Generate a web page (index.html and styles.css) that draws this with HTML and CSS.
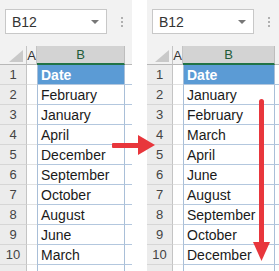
FILE: index.html
```html
<!DOCTYPE html>
<html>
<head>
<meta charset="utf-8">
<link rel="stylesheet" href="styles.css">
</head>
<body>
<div class="panel left">
  <div class="toolbar">
    <div class="namebox"><span>B12</span><i class="caret"></i></div>
    <div class="dots"><b></b><b></b><b></b></div>
  </div>
  <div class="sheet">
    <div class="row head"><div class="rh corner"><svg width="14" height="12" viewBox="0 0 14 12"><polygon points="14,0 14,12 0,12" fill="#c9c9c9"/></svg></div><div class="ca">A</div><div class="cb">B</div><div class="cc"></div></div>
    <div class="row"><div class="rh">1</div><div class="ca"></div><div class="cb hdr">Date</div><div class="cc"></div></div>
    <div class="row"><div class="rh">2</div><div class="ca"></div><div class="cb">February</div><div class="cc"></div></div>
    <div class="row"><div class="rh">3</div><div class="ca"></div><div class="cb">January</div><div class="cc"></div></div>
    <div class="row"><div class="rh">4</div><div class="ca"></div><div class="cb">April</div><div class="cc"></div></div>
    <div class="row"><div class="rh">5</div><div class="ca"></div><div class="cb">December</div><div class="cc"></div></div>
    <div class="row"><div class="rh">6</div><div class="ca"></div><div class="cb">September</div><div class="cc"></div></div>
    <div class="row"><div class="rh">7</div><div class="ca"></div><div class="cb">October</div><div class="cc"></div></div>
    <div class="row"><div class="rh">8</div><div class="ca"></div><div class="cb">August</div><div class="cc"></div></div>
    <div class="row"><div class="rh">9</div><div class="ca"></div><div class="cb">June</div><div class="cc"></div></div>
    <div class="row"><div class="rh">10</div><div class="ca"></div><div class="cb">March</div><div class="cc"></div></div>
    <div class="row"><div class="rh"></div><div class="ca"></div><div class="cb"></div><div class="cc"></div></div>
  </div>
</div>
<div class="panel right">
  <div class="toolbar">
    <div class="namebox"><span>B12</span><i class="caret"></i></div>
    <div class="dots"><b></b><b></b><b></b></div>
  </div>
  <div class="sheet">
    <div class="row head"><div class="rh corner"><svg width="14" height="12" viewBox="0 0 14 12"><polygon points="14,0 14,12 0,12" fill="#c9c9c9"/></svg></div><div class="ca">A</div><div class="cb">B</div><div class="cc"></div></div>
    <div class="row"><div class="rh">1</div><div class="ca"></div><div class="cb hdr">Date</div><div class="cc"></div></div>
    <div class="row"><div class="rh">2</div><div class="ca"></div><div class="cb">January</div><div class="cc"></div></div>
    <div class="row"><div class="rh">3</div><div class="ca"></div><div class="cb">February</div><div class="cc"></div></div>
    <div class="row"><div class="rh">4</div><div class="ca"></div><div class="cb">March</div><div class="cc"></div></div>
    <div class="row"><div class="rh">5</div><div class="ca"></div><div class="cb">April</div><div class="cc"></div></div>
    <div class="row"><div class="rh">6</div><div class="ca"></div><div class="cb">June</div><div class="cc"></div></div>
    <div class="row"><div class="rh">7</div><div class="ca"></div><div class="cb">August</div><div class="cc"></div></div>
    <div class="row"><div class="rh">8</div><div class="ca"></div><div class="cb">September</div><div class="cc"></div></div>
    <div class="row"><div class="rh">9</div><div class="ca"></div><div class="cb">October</div><div class="cc"></div></div>
    <div class="row"><div class="rh">10</div><div class="ca"></div><div class="cb">December</div><div class="cc"></div></div>
    <div class="row"><div class="rh"></div><div class="ca"></div><div class="cb"></div><div class="cc"></div></div>
  </div>
</div>
<svg class="arrows" width="279" height="271" viewBox="0 0 279 271">
  <g fill="#e8363c">
    <rect x="112" y="143" width="29" height="5" rx="1"/>
    <polygon points="138,135 138,155 155,145"/>
    <rect x="259" y="99" width="5" height="146" rx="2.5"/>
    <polygon points="253,242 270,242 261.5,261"/>
  </g>
</svg>
</body>
</html>
```
FILE: styles.css
```css
html, body {
  margin: 0;
  padding: 0;
}
body {
  width: 279px;
  height: 271px;
  overflow: hidden;
  background: #ffffff;
  display: flex;
  gap: 15px;
  position: relative;
  font-family: "Liberation Sans", Arial, sans-serif;
}
.panel {
  width: 132px;
  flex: none;
  display: flex;
  flex-direction: column;
  background: #f2f2f2;
  overflow: hidden;
}
.left { --rh: 27px; --cb: 88px; }
.right { --rh: 26px; --cb: 92px; }

.toolbar {
  height: 46px;
  flex: none;
  display: flex;
  align-items: flex-start;
  box-sizing: border-box;
  padding: 9px 0 0 5px;
}
.namebox {
  width: 102px;
  height: 25px;
  box-sizing: border-box;
  background: #fff;
  border: 1px solid #c8c8c8;
  display: flex;
  align-items: center;
  justify-content: space-between;
  padding: 0 7px 0 6px;
  font-size: 14px;
  color: #333;
}
.caret {
  width: 0;
  height: 0;
  border-left: 4px solid transparent;
  border-right: 4px solid transparent;
  border-top: 4px solid #777;
}
.dots {
  margin: 8px 0 0 14px;
  display: flex;
  flex-direction: column;
  gap: 2px;
}
.dots b {
  width: 2px;
  height: 2px;
  background: #b0b0b0;
  display: block;
}

.sheet {
  flex: 1;
  display: flex;
  flex-direction: column;
  background: #fff;
}
.row {
  display: flex;
  height: 20px;
  flex: none;
}
.rh {
  width: var(--rh);
  flex: none;
  box-sizing: border-box;
  background: #ececec;
  border-right: 1px solid #c4c4c4;
  border-bottom: 1px solid #d6d6d6;
  color: #444;
  font-size: 13px;
  display: flex;
  align-items: center;
  justify-content: center;
}
.ca {
  width: 10px;
  flex: none;
  box-sizing: border-box;
  border-bottom: 1px solid #e2e2e2;
}
.cb {
  width: var(--cb);
  flex: none;
  box-sizing: border-box;
  border-left: 1px solid #a9bfd8;
  border-right: 1px solid #a9bfd8;
  border-bottom: 1px solid #b3c7de;
  font-size: 14px;
  color: #1a1a1a;
  padding-left: 3px;
  display: flex;
  align-items: center;
  white-space: nowrap;
}
.cc {
  flex: 1;
  box-sizing: border-box;
  border-bottom: 1px solid #b3c7de;
}
.cb.hdr {
  background: #5b9bd5;
  color: #fff;
  font-weight: bold;
}

.row.head {
  height: 19px;
  background: #f2f2f2;
}
.row.head .rh {
  background: #f2f2f2;
  border-right: 1px solid #c4c4c4;
  border-bottom: 1px solid #b8b8b8;
  align-items: flex-end;
  justify-content: flex-end;
  padding: 0 3px 2px 0;
}
.row.head .rh svg { display: block; }
.row.head .ca {
  background: #f2f2f2;
  border-bottom: 1px solid #b8b8b8;
  border-right: 1px solid #c4c4c4;
  font-size: 13px;
  color: #333;
  display: flex;
  align-items: center;
  justify-content: center;
}
.row.head .cb {
  background: #d3d3d3;
  border-left: none;
  border-right: 1px solid #bdbdbd;
  border-bottom: 2px solid #217346;
  color: #1f5c3a;
  font-size: 13px;
  justify-content: center;
  padding: 0;
}
.row.head .cc {
  background: #f2f2f2;
  border-bottom: 1px solid #b8b8b8;
}

.arrows {
  position: absolute;
  left: 0;
  top: 0;
  pointer-events: none;
}
```
